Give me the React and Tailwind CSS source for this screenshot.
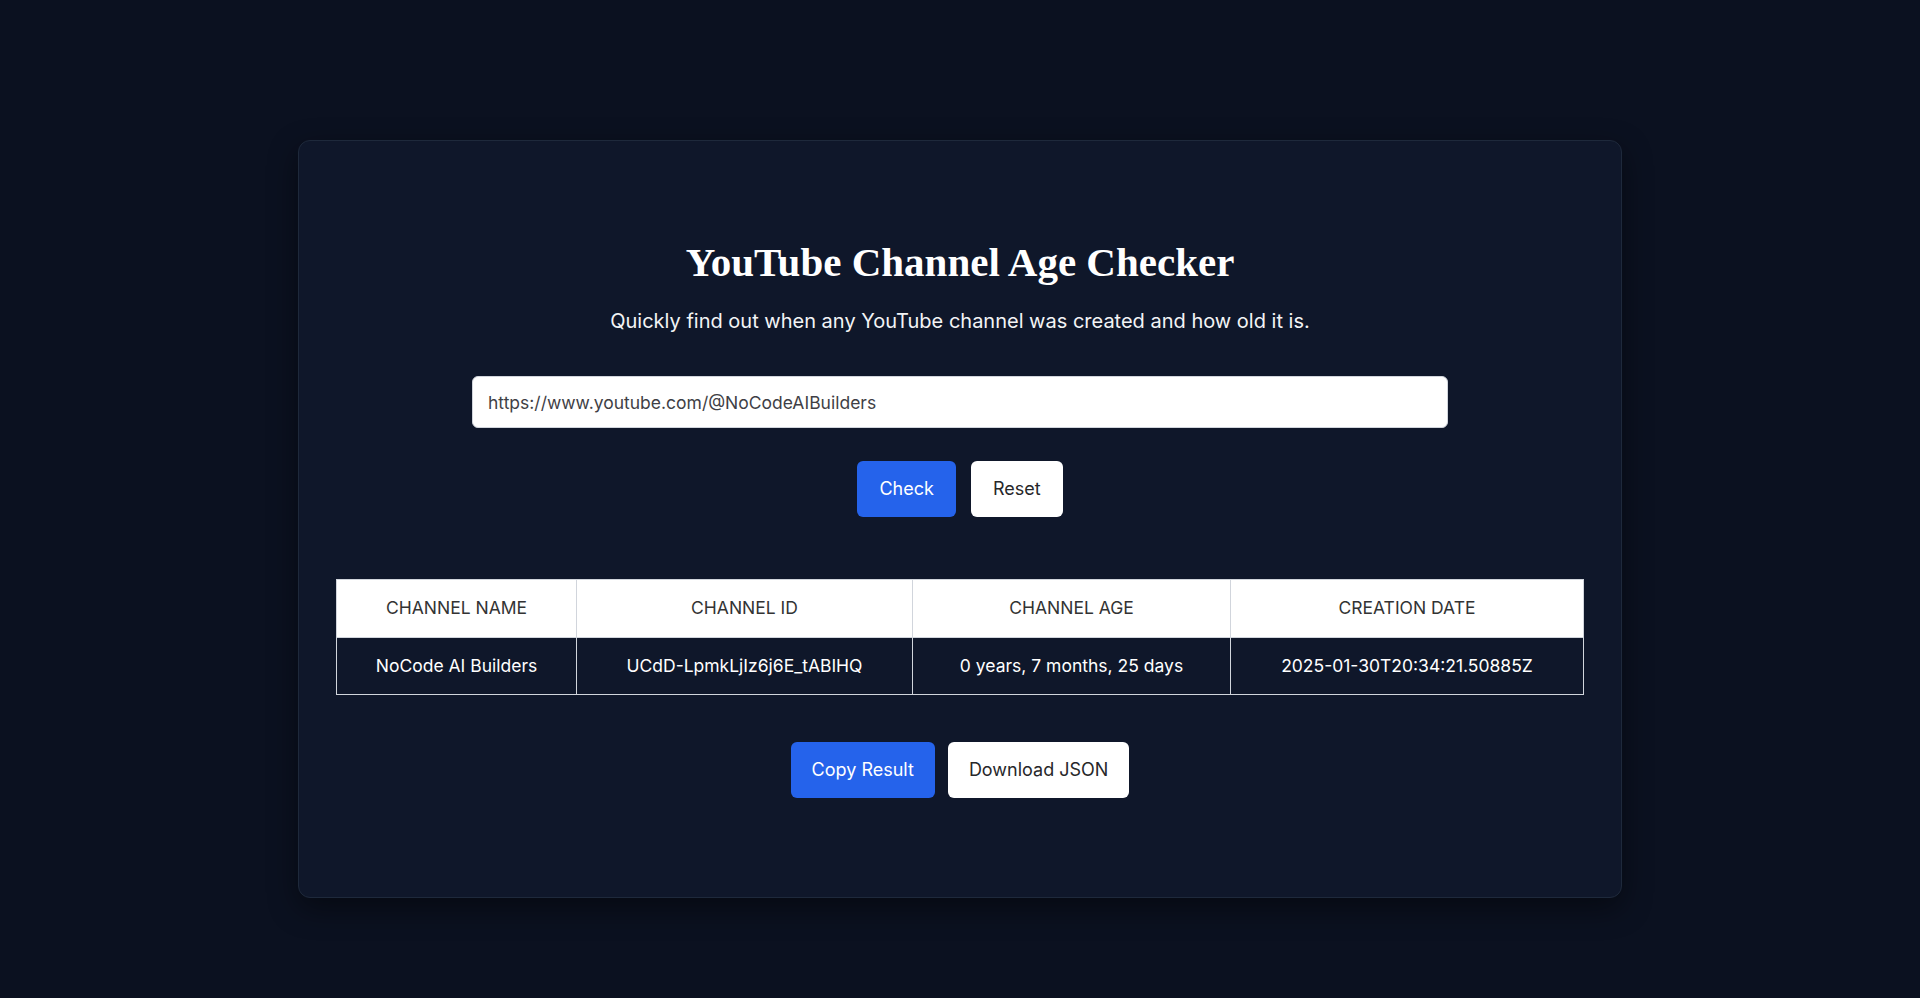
import { useState } from "react";

const result = {
  name: "NoCode AI Builders",
  id: "UCdD-LpmkLjIz6j6E_tABIHQ",
  age: "0 years, 7 months, 25 days",
  created: "2025-01-30T20:34:21.50885Z",
};

const App = () => {
  const [url, setUrl] = useState("https://www.youtube.com/@NoCodeAIBuilders");

  return (
    <div className="min-h-screen bg-[#0b1120] flex justify-center pt-[140px] font-['Inter','Noto_Sans',sans-serif]">
      <div className="w-[1324px] h-[758px] bg-[#0f172a] border border-[#1e293b] rounded-xl shadow-[0_10px_30px_rgba(0,0,0,0.45)] px-[37px] pt-[97px] flex flex-col items-center">
        {/* Header */}
        <h1 className="text-white text-[41px] leading-[48px] font-bold font-['Liberation_Serif','Times_New_Roman',serif]">
          YouTube Channel Age Checker
        </h1>
        <p className="mt-[21px] text-[#f3f4f6] text-[20px] leading-7">
          Quickly find out when any YouTube channel was created and how old it is.
        </p>

        {/* Input */}
        <input
          value={url}
          onChange={(e) => setUrl(e.target.value)}
          className="mt-[41px] w-[976px] h-[52px] bg-white border border-gray-300 rounded-md px-[15px] text-[17.5px] text-[#3f3f46] outline-none"
        />

        <div className="mt-[33px] flex gap-[15px]">
          <button className="bg-[#2563eb] text-white text-lg leading-7 px-[22px] py-[14px] rounded-md">Check</button>
          <button className="bg-white text-[#27272a] text-lg leading-7 px-[22px] py-[14px] rounded-md">Reset</button>
        </div>

        {/* Result table */}
        <table className="mt-[62px] w-full border-collapse table-fixed text-[17.5px]">
          <thead>
            <tr className="bg-white text-[#333333]">
              <th className="w-[240px] h-[58px] font-normal border border-gray-300">CHANNEL NAME</th>
              <th className="w-[336px] h-[58px] font-normal border border-gray-300">CHANNEL ID</th>
              <th className="w-[318px] h-[58px] font-normal border border-gray-300">CHANNEL AGE</th>
              <th className="h-[58px] font-normal border border-gray-300">CREATION DATE</th>
            </tr>
          </thead>
          <tbody>
            <tr className="text-white text-center">
              <td className="h-[57px] border border-gray-300">{result.name}</td>
              <td className="h-[57px] border border-gray-300">{result.id}</td>
              <td className="h-[57px] border border-gray-300">{result.age}</td>
              <td className="h-[57px] border border-gray-300">{result.created}</td>
            </tr>
          </tbody>
        </table>

        <div className="mt-[47px] flex gap-[13px]">
          <button className="bg-[#2563eb] text-white text-lg leading-7 px-[21px] py-[14px] rounded-md">Copy Result</button>
          <button className="bg-white text-[#27272a] text-lg leading-7 px-[21px] py-[14px] rounded-md">Download JSON</button>
        </div>
      </div>
    </div>
  );
};

export default App;
